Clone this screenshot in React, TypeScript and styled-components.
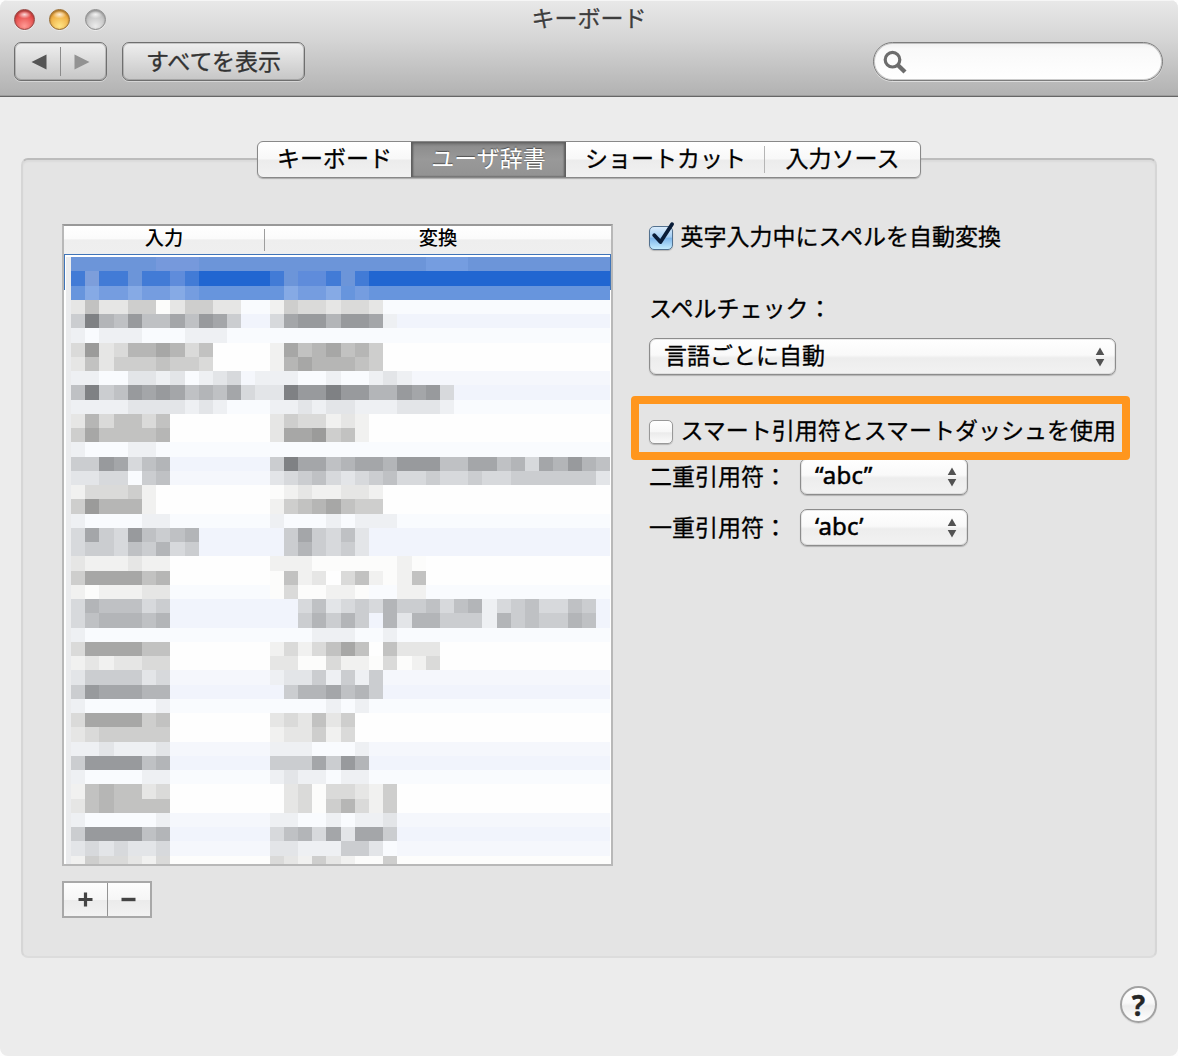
import React from "react";
import styled, { createGlobalStyle, css } from "styled-components";

const GlobalStyle = createGlobalStyle`
  *, *::before, *::after { box-sizing: border-box; }
  body {
    margin: 0;
    background: #fdfdfd;
    font-family: "Noto Sans CJK JP", "Noto Sans", sans-serif;
    font-size: 23px;
    color: #000;
    -webkit-text-stroke: 0.3px currentColor;
  }
`;

const Window = styled.main`
  display: flex;
  flex-direction: column;
  width: 1178px;
  height: 1056px;
  overflow: hidden;
  border-radius: 8px;
  background: #ececec;
`;

const TitleArea = styled.header`
  height: 97px;
  flex: none;
  background: linear-gradient(#e9e9e9 0, #d6d6d6 38px, #b2b2b2 95px);
  border-bottom: 1px solid #666;
  box-shadow: inset 0 1px 0 #f6f6f6, inset 0 -1px 0 #9c9c9c;
`;

const TitleRow = styled.div`
  display: grid;
  grid-template-columns: 200px 1fr 200px;
  align-items: center;
  height: 39px;
  padding: 0 14px;
`;

const Lights = styled.div`
  display: flex;
  gap: 14.3px;
`;

const Light = styled.span<{ $rim: string; $top: string; $bottom: string }>`
  width: 21px;
  height: 21px;
  border-radius: 50%;
  border: 1.5px solid ${(p) => p.$rim};
  background:
    radial-gradient(ellipse 7px 4px at 50% 24%, rgba(255, 255, 255, 0.8), rgba(255, 255, 255, 0) 100%),
    radial-gradient(circle at 50% 85%, ${(p) => p.$bottom}, ${(p) => p.$top} 70%);
  box-shadow: 0 1px 0 rgba(255, 255, 255, 0.5), inset 0 1px 2px ${(p) => p.$rim};
`;

const Title = styled.h1`
  margin: 0;
  padding-bottom: 5px;
  font-size: 23px;
  font-weight: 400;
  line-height: 34px;
  text-align: center;
  color: #3d3d3d;
  text-shadow: 0 1px 0 rgba(255, 255, 255, 0.5);
`;

const ToolRow = styled.div`
  display: flex;
  align-items: center;
  height: 45px;
  padding: 0 15px 0 14px;
`;

const toolbarFace = css`
  height: 39px;
  border: 1px solid #6f6f6f;
  border-radius: 7px;
  background: linear-gradient(#efefef, #c6c6c6);
  box-shadow: inset 0 0 0 1px rgba(0, 0, 0, 0.17), 0 1px 0 rgba(255, 255, 255, 0.4);
`;

const NavGroup = styled.div`
  ${toolbarFace}
  display: grid;
  grid-template-columns: 1fr 1fr;
  width: 93px;
`;

const NavButton = styled.button<{ $divided?: boolean }>`
  display: flex;
  align-items: center;
  justify-content: center;
  margin: 4px 0;
  padding: ${(p) => (p.$divided ? "0 0 0 3px" : "0 3px 0 0")};
  border: 0;
  border-right: ${(p) => (p.$divided ? "1px solid #8b8b8b" : "0")};
  background: none;
`;

const ShowAll = styled.button`
  ${toolbarFace}
  width: 183px;
  margin-left: 15px;
  padding: 0 0 3px;
  font: inherit;
  line-height: 33px;
  color: #333;
`;

const Search = styled.label`
  display: flex;
  align-items: center;
  width: 290px;
  height: 39px;
  margin-left: auto;
  padding-left: 9px;
  border: 1px solid #7c7c7c;
  border-radius: 20px;
  background: linear-gradient(#f0f0f0, #f9f9f9 6px, #fff);
  box-shadow: inset 0 0 0 1px rgba(0, 0, 0, 0.2), 0 1px 0 rgba(255, 255, 255, 0.5);
`;

const Body = styled.div`
  flex: 1;
  display: flex;
  flex-direction: column;
  padding: 61px 21px 0;
`;

const Panel = styled.section`
  height: 800px;
  border: 2px solid #d6d6d6;
  border-top-color: #bcbcbc;
  border-bottom-color: #dcdcdc;
  border-radius: 7px;
  background: #e4e4e4;
  box-shadow: inset 0 2px 2px rgba(0, 0, 0, 0.04);
`;

const Tabs = styled.nav`
  display: flex;
  width: 664px;
  height: 37px;
  margin: -19px 0 0 234px;
  border: 1px solid #888;
  border-radius: 6px;
  overflow: hidden;
  background: linear-gradient(#fff, #f8f8f8 48%, #ececec 52%, #f1f1f1);
  box-shadow: 0 1px 1px rgba(0, 0, 0, 0.25);
`;

const Tab = styled.button<{ $width: number; $active?: boolean; $divided?: boolean }>`
  width: ${(p) => p.$width}px;
  flex: none;
  padding: 0 0 4px;
  border: 0;
  background: ${(p) => (p.$divided ? "linear-gradient(#b5b5b5, #b5b5b5) right 50% / 1px 27px no-repeat" : "none")};
  font: inherit;
  line-height: 31px;
  color: #000;
  ${(p) =>
    p.$active &&
    css`
      color: #fff;
      background: linear-gradient(#8a8a8a, #999 50%, #929292);
      box-shadow: inset 2px 0 2px #5e5e5e, inset -2px 0 2px #5e5e5e, inset 0 2px 3px #6a6a6a;
      text-shadow: 0 -1px 1px rgba(0, 0, 0, 0.45);
      -webkit-text-stroke: 0;
    `}
`;

const Columns = styled.div`
  display: flex;
  align-items: flex-start;
  gap: 36px;
  padding: 40px 39px 0;
`;

const Dictionary = styled.div`
  width: 551px;
  padding-top: 6px;
`;

const Table = styled.div`
  height: 642px;
  border: 2px solid #b8b8b8;
  border-top-color: #999;
  background: #fff;
`;

const TableHead = styled.div`
  display: grid;
  grid-template-columns: 201px 1fr;
  height: 28px;
  background: linear-gradient(#fff, #fbfbfb 45%, #eee 50%, #efefef);
`;

const HeadCell = styled.div<{ $divided?: boolean }>`
  margin: 3px 0;
  border-right: ${(p) => (p.$divided ? "1px solid #9d9d9d" : "0")};
  font-size: 19.3px;
  font-weight: 500;
  line-height: 17px;
  text-align: center;
  -webkit-text-stroke: 0;
`;

const TableBody = styled.div`
  position: relative;
  display: grid;
  grid-template-columns: 5px 539.5px;
  height: 610px;
  padding: 3px 0 0 2px;
  background: #fff;
`;

const Selection = styled.span`
  position: absolute;
  top: 0;
  left: 0;
  width: 547px;
  height: 36px;
  border: 1px solid #3f74b8;
  border-bottom: 0;
`;

const Edge = styled.div`
  background: #ebecee;
`;

const Mosaic = styled.div`
  position: relative;
  height: 607px;
  overflow: hidden;
`;

const MosaicRow = styled.div`
  display: grid;
  grid-template-columns: repeat(38, 14.197px);
  height: 14.25px;
`;

const PlusMinus = styled.div`
  display: flex;
  width: 90px;
  height: 37px;
  margin-top: 15px;
  border: 2px solid #a8a8a8;
`;

const SmallButton = styled.button<{ $divided?: boolean }>`
  flex: 1;
  display: flex;
  align-items: center;
  justify-content: center;
  padding: 0;
  border: 0;
  border-right: ${(p) => (p.$divided ? "1px solid #949494" : "0")};
  background: linear-gradient(#fdfdfd, #f6f6f6 50%, #ebebeb 52%, #f2f2f2);
`;

const Settings = styled.div`
  display: flex;
  flex-direction: column;
  width: 467px;
`;

const Line = styled.div<{ $top: number; $height: number }>`
  position: relative;
  display: flex;
  align-items: center;
  height: ${(p) => p.$height}px;
  margin-top: ${(p) => p.$top}px;
  white-space: nowrap;
`;

const Caption = styled.span<{ $width?: number }>`
  width: ${(p) => (p.$width ? `${p.$width}px` : "auto")};
  padding-bottom: 4px;
  line-height: 34px;
`;

const Check = styled.span<{ $on?: boolean }>`
  display: flex;
  flex: none;
  width: 24px;
  height: 24px;
  margin: 2px 7.5px 0 0;
  border: 1.5px solid ${(p) => (p.$on ? "#53718f" : "#989898")};
  border-radius: 5px;
  background: ${(p) =>
    p.$on
      ? "linear-gradient(#d9ebfb, #a4cdf2 45%, #7fb6ea 52%, #c4ecff)"
      : "linear-gradient(#fff, #f7f7f7 48%, #ebebeb 54%, #fafafa)"};
  box-shadow: 0 1px 1px rgba(0, 0, 0, 0.2);
`;

const CheckMark = styled.svg`
  flex: none;
  margin-top: -5px;
`;

const Highlight = styled.span`
  position: absolute;
  z-index: 1;
  top: -16px;
  left: -18px;
  width: 499px;
  height: 64px;
  border: 8.5px solid #ff961e;
  border-radius: 4px;
  pointer-events: none;
`;

const Popup = styled.button<{ $width: number }>`
  display: flex;
  align-items: center;
  justify-content: space-between;
  width: ${(p) => p.$width}px;
  height: 37px;
  padding: 0 10px 0 14px;
  border: 1px solid #8c8c8c;
  border-radius: 7px;
  background: linear-gradient(#fff, #f9f9f9 46%, #ededed 54%, #f2f2f2);
  box-shadow: inset 0 0 0 1px rgba(0, 0, 0, 0.08), 0 1px 1px rgba(0, 0, 0, 0.22);
  font: inherit;
  color: #000;
`;

const PopupValue = styled.span<{ $latin?: boolean }>`
  padding-bottom: ${(p) => (p.$latin ? 3 : 5)}px;
  line-height: 30px;
  ${(p) =>
    p.$latin &&
    css`
      font-family: "Noto Sans", "Open Sans", sans-serif;
      font-size: 24px;
      letter-spacing: 0.2px;
      -webkit-text-stroke: 0.5px currentColor;
    `}
`;

const Footer = styled.footer`
  display: flex;
  justify-content: flex-end;
  padding-top: 28px;
`;

const Help = styled.button`
  width: 37px;
  height: 37px;
  padding: 0;
  border: 2px solid #a2a2a2;
  border-radius: 50%;
  background: linear-gradient(#fff, #f8f8f8 45%, #ececec 55%, #fff);
  box-shadow: 0 1px 1px rgba(0, 0, 0, 0.1);
  font: 700 28px/32px "Noto Sans", "Open Sans", sans-serif;
  color: #262626;
`;

type Tone = "cool" | "plain";
type Strip = [background: string, tone: Tone, left: string, right: string];

const W = "#fefefe";
const A = "#f1f4fc";
const B = "#f5f7fc";
const C = "#f9fbfe";

// Each digit is a darkness step, a dot leaves the row's own background.
const strips: Strip[] = [
  [C, "plain", "252244024422..", "14332332"],
  [A, "cool", "496585575874..", "378868871"],
  [C, "cool", "10111000111000", "0000000"],
  [W, "plain", "3823667635", "17567564"],
  [W, "plain", "2524445443", "16766654"],
  [B, "cool", "110022120123.1", "1100100121"],
  [A, "cool", "59458787565732", "2988988668783"],
  [C, "cool", "11112222121.00", "1121221112221"],
  [W, "plain", "2635535", "2433121"],
  [W, "plain", "4755556", "2778451"],
  [C, "cool", "1000110", "0000000"],
  [A, "cool", "4487356", "497756776888557756376865"],
  [B, "cool", "2233045", "234532345334334334444442"],
  [W, "plain", "133341", "01211221"],
  [W, "plain", "486661", "14567544"],
  [C, "cool", "1000011", "100010111"],
  [A, "cool", "374385456", ".474352"],
  [A, "cool", "344354634", ".464342"],
  [W, "plain", "2111211", "11100000010"],
  [W, "plain", "4777756", "0512.351015"],
  [C, "plain", "1011122", "0300110..11"],
  [A, "cool", "3655534", "..352343644535613453354."],
  [A, "cool", "3566656", "..46464.626644416454465."],
  [C, "cool", "1000000", "000111001"],
  [W, "plain", "3777755", "1313575.5222"],
  [W, "plain", "1212233", "220031103013"],
  [B, "cool", "2444423", "12241414"],
  [A, "cool", "4877766", ".4667564"],
  [C, "cool", "1000001", "00001010"],
  [W, "plain", "3777745", "232524"],
  [W, "plain", "2344444", "122413"],
  [B, "cool", "1121112", "1110001"],
  [A, "cool", "4888856", "4447486"],
  [C, "cool", "1000011", "1211011"],
  [W, "plain", "1565523", ".23033214"],
  [W, "plain", "2565555", ".23046314"],
  [B, "cool", "1000001", "110010112"],
  [A, "cool", "4888856", "356372774"],
  [B, "cool", "2323223", "221114420"],
  ["#fdfdfc", "plain", "1433213", "321421004"],
];

const levels = [252, 241, 230, 218, 206, 194, 182, 167, 155, 130];

const shade = (mark: string, background: string, tone: Tone) => {
  if (mark === ".") return background;
  const v = levels[Number(mark)];
  return tone === "cool" ? `rgb(${v - 3}, ${v - 1}, ${v + 2})` : `rgb(${v}, ${v}, ${v - 1})`;
};

const blues: Record<string, string> = {
  a: "#6c95d9",
  b: "#7699dc",
  c: "#2166d1",
  d: "#427bd6",
  e: "#5f8cdb",
  f: "#7d9edb",
  g: "#6795dd",
  h: "#86aae5",
  i: "#759de0",
};

const selectedStrips = [
  "aaaaaabbb".padEnd(25, "a") + "iii".padEnd(13, "a"),
  "dfddaddedcccccdaeedad".padEnd(38, "c"),
  "ghiihiihigggggghiihgi".padEnd(38, "g"),
];

const mosaic: string[][] = [
  ...selectedStrips.map((s) => [...s].map((m) => blues[m])),
  ...strips.map(([bg, tone, left, right]) =>
    [...(left.padEnd(14, ".") + right.padEnd(24, "."))].map((m) => shade(m, bg, tone)),
  ),
];

const Steppers = () => (
  <svg width="10" height="20" viewBox="0 0 10 20" fill="#525252">
    <path d="M5 0.5 9.3 8H0.7zM5 19.5 9.3 12H0.7z" />
  </svg>
);

export default function App() {
  return (
    <>
      <GlobalStyle />
      <Window>
        <TitleArea>
          <TitleRow>
            <Lights>
              <Light $rim="#94423f" $top="#e2403f" $bottom="#ff9a94" />
              <Light $rim="#96692c" $top="#eda73a" $bottom="#ffe587" />
              <Light $rim="#8b8b8b" $top="#bdbdbd" $bottom="#ececec" />
            </Lights>
            <Title>キーボード</Title>
          </TitleRow>
          <ToolRow>
            <NavGroup>
              <NavButton $divided aria-label="戻る">
                <svg width="16" height="16" viewBox="0 0 16 16">
                  <path d="M0.5 8 15.5 0.5v15z" fill="#555" />
                </svg>
              </NavButton>
              <NavButton aria-label="進む">
                <svg width="16" height="16" viewBox="0 0 16 16">
                  <path d="M15.5 8 0.5 0.5v15z" fill="#929292" />
                </svg>
              </NavButton>
            </NavGroup>
            <ShowAll>すべてを表示</ShowAll>
            <Search>
              <svg width="24" height="24" viewBox="0 0 24 24" fill="none" stroke="#6c6c6c">
                <circle cx="9.5" cy="9.7" r="7.3" strokeWidth="3.2" />
                <path d="M14.8 15 22 22" strokeWidth="4.4" />
              </svg>
            </Search>
          </ToolRow>
        </TitleArea>
        <Body>
          <Panel>
            <Tabs>
              <Tab $width={153}>キーボード</Tab>
              <Tab $width={155} $active>
                ユーザ辞書
              </Tab>
              <Tab $width={199} $divided>
                ショートカット
              </Tab>
              <Tab $width={155}>入力ソース</Tab>
            </Tabs>
            <Columns>
              <Dictionary>
                <Table>
                  <TableHead>
                    <HeadCell $divided>入力</HeadCell>
                    <HeadCell>変換</HeadCell>
                  </TableHead>
                  <TableBody>
                    <Selection />
                    <Edge />
                    <Mosaic>
                      {mosaic.map((row, y) => (
                        <MosaicRow key={y}>
                          {row.map((color, x) => (
                            <span key={x} style={{ background: color }} />
                          ))}
                        </MosaicRow>
                      ))}
                    </Mosaic>
                  </TableBody>
                </Table>
                <PlusMinus>
                  <SmallButton $divided aria-label="追加">
                    <svg width="15" height="15" viewBox="0 0 15 15" stroke="#444" strokeWidth="3.2">
                      <path d="M7.5 0.5v14M0.5 7.5h14" />
                    </svg>
                  </SmallButton>
                  <SmallButton aria-label="削除">
                    <svg width="15" height="15" viewBox="0 0 15 15" stroke="#444" strokeWidth="3.4">
                      <path d="M0.5 7.5h14" />
                    </svg>
                  </SmallButton>
                </PlusMinus>
              </Dictionary>
              <Settings>
                <Line $top={0} $height={38}>
                  <Check $on>
                    <CheckMark width="24" height="27" viewBox="0 0 24 27" fill="none" stroke="#0a1c38">
                      <path d="M4.3 13.2 10.5 20 22 2.2" strokeWidth="3.8" strokeLinecap="round" strokeLinejoin="round" />
                    </CheckMark>
                  </Check>
                  <Caption>英字入力中にスペルを自動変換</Caption>
                </Line>
                <Line $top={34} $height={38}>
                  <Caption>スペルチェック：</Caption>
                </Line>
                <Line $top={10} $height={37}>
                  <Popup $width={467}>
                    <PopupValue>言語ごとに自動</PopupValue>
                    <Steppers />
                  </Popup>
                </Line>
                <Line $top={37} $height={38}>
                  <Highlight />
                  <Check />
                  <Caption>スマート引用符とスマートダッシュを使用</Caption>
                </Line>
                <Line $top={8} $height={37}>
                  <Caption $width={151}>二重引用符：</Caption>
                  <Popup $width={168}>
                    <PopupValue $latin>“abc”</PopupValue>
                    <Steppers />
                  </Popup>
                </Line>
                <Line $top={14} $height={37}>
                  <Caption $width={151}>一重引用符：</Caption>
                  <Popup $width={168}>
                    <PopupValue $latin>‘abc’</PopupValue>
                    <Steppers />
                  </Popup>
                </Line>
              </Settings>
            </Columns>
          </Panel>
          <Footer>
            <Help>?</Help>
          </Footer>
        </Body>
      </Window>
    </>
  );
}
